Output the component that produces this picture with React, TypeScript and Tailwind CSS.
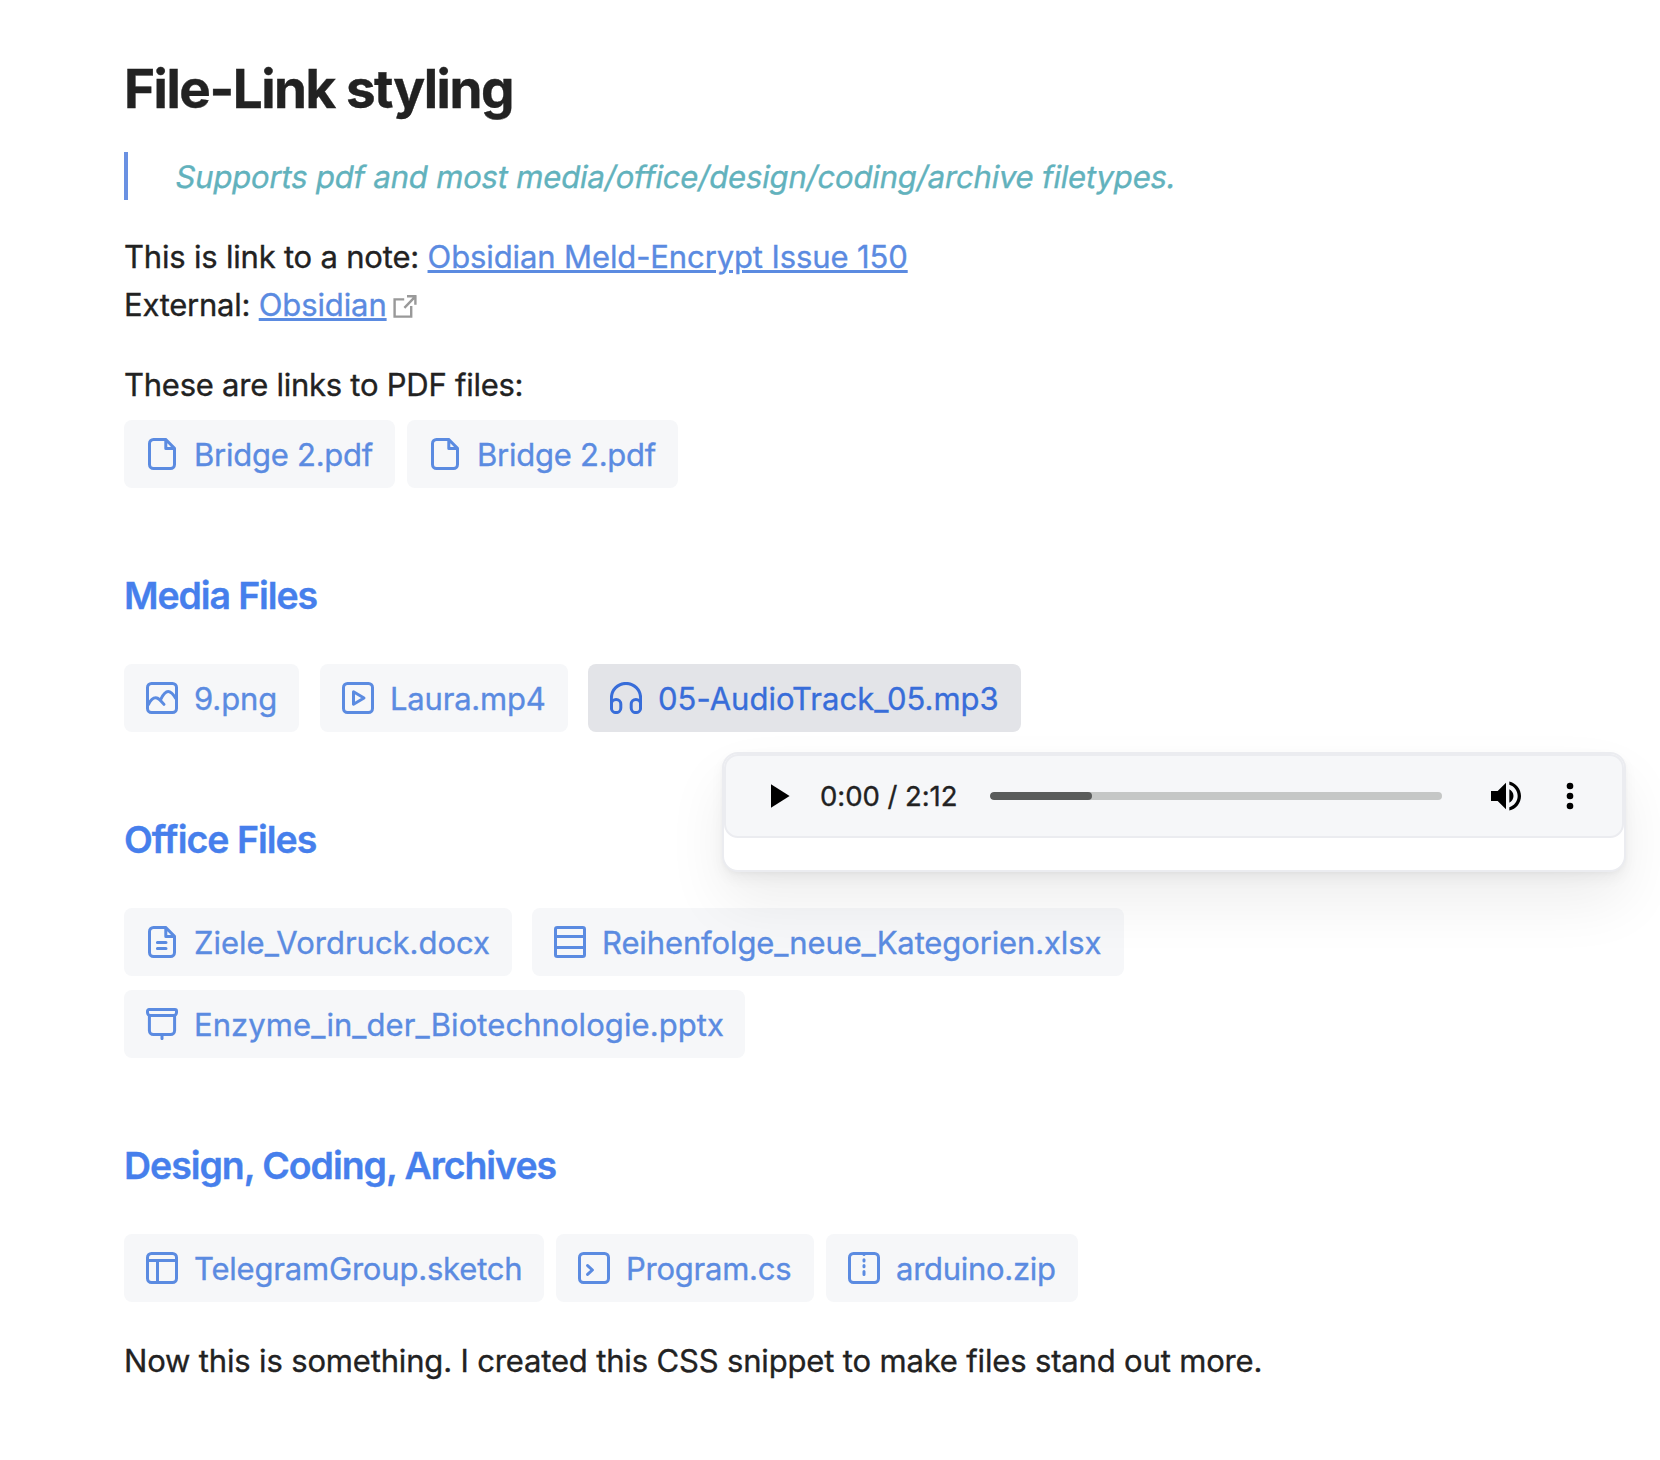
import React from "react";

type IconName = "pdf" | "image" | "video" | "audio" | "doc" | "sheet" | "slides" | "design" | "code" | "zip";

const FILE_OUTLINE =
  "M19.8 1.5H7.5a4 4 0 0 0-4 4v21a4 4 0 0 0 4 4h17a4 4 0 0 0 4-4V10.4L19.8 1.5V10.6H28.3";

const shapes: Record<IconName, React.ReactNode> = {
  pdf: <path d={FILE_OUTLINE} />,
  image: (
    <>
      <rect x="1.5" y="1.5" width="29" height="29" rx="4" />
      <path d="M2.5 22.5C4.5 18 7 15.8 9.8 15.8c2.6 0 4.2 1.8 8.2 6.6" />
      <path d="M14.6 17.6C17.2 12.4 19.3 9.6 22.2 9.6c2.8 0 5 2.6 7.6 7" />
    </>
  ),
  video: (
    <>
      <rect x="1.5" y="1.5" width="29" height="29" rx="4" />
      <path d="M11.5 9.8 22 16 11.5 22.2Z" />
    </>
  ),
  audio: (
    <>
      <path d="M1.4 26V16a14.6 14.6 0 0 1 29.2 0v10" />
      <rect x="1.4" y="17.4" width="9.4" height="13.2" rx="4.7" />
      <rect x="21.2" y="17.4" width="9.4" height="13.2" rx="4.7" />
    </>
  ),
  doc: (
    <>
      <path d={FILE_OUTLINE} />
      <path d="M11.4 16.5h8.6M11.4 22.6h8.6" />
    </>
  ),
  sheet: (
    <>
      <rect x="1.5" y="1.5" width="29" height="29" rx="1.8" />
      <path d="M1.5 10.6h29M1.5 21.5h29" />
    </>
  ),
  slides: (
    <>
      <path d="M3 1.5h26a1.5 1.5 0 0 1 1.5 1.5v1.5a3 3 0 0 1-3 3h-23a3 3 0 0 1-3-3V3A1.5 1.5 0 0 1 3 1.5Z" />
      <path d="M3.4 7.5v15a4 4 0 0 0 4 4h17.2a4 4 0 0 0 4-4v-15" />
      <path d="M16 27v3.6" />
    </>
  ),
  design: (
    <>
      <rect x="1.5" y="1.5" width="29" height="29" rx="4" />
      <path d="M1.5 8.5h29M11.5 8.5v22" />
    </>
  ),
  code: (
    <>
      <rect x="1.5" y="1.5" width="29" height="29" rx="4" />
      <path d="m9.6 13.6 4.8 4.4-4.8 4.4" />
    </>
  ),
  zip: (
    <>
      <rect x="1.5" y="1.5" width="29" height="29" rx="4" />
      <path d="M16 1.8v.6M16 7.7v1.2M16 13.5v1.2M16 19.6v2.9" />
    </>
  ),
};

function FileIcon({ name }: { name: IconName }) {
  return (
    <svg
      className="size-8 shrink-0"
      viewBox="0 0 32 32"
      fill="none"
      stroke="currentColor"
      strokeWidth="3"
      strokeLinecap="round"
      strokeLinejoin="round"
    >
      {shapes[name]}
    </svg>
  );
}

interface FileLinkProps {
  icon: IconName;
  label: string;
  size: string;
  active?: boolean;
  children?: React.ReactNode;
}

function FileLink({ icon, label, size, active, children }: FileLinkProps) {
  const tone = active ? "bg-[#e3e4e8] text-[#386dd9]" : "bg-[#f6f7f9] text-[#5b8be1]";
  return (
    <a className={`relative flex h-[68px] shrink-0 items-center gap-4 rounded-lg pl-[22px] ${tone} ${size}`}>
      <FileIcon name={icon} />
      <span className="pt-[2px] whitespace-nowrap">{label}</span>
      {children}
    </a>
  );
}

function AudioPopover() {
  return (
    <div className="absolute top-[88px] left-[134px] z-10 h-[120px] w-[904px] rounded-2xl border-2 border-[#ebecf0] bg-white shadow-[0_2px_4px_rgba(0,0,0,0.028),0_6.8px_13.4px_rgba(0,0,0,0.042),0_30px_60px_rgba(0,0,0,0.07)]">
      <div className="flex h-[84px] items-center rounded-[14px] border-2 border-[#ebecf0] bg-[#f6f7f9] pl-[45px] text-[27.5px] leading-none tracking-[-0.05px] text-[#222]">
        <svg className="h-6 w-[19px] shrink-0" viewBox="0 0 19 24" fill="#000">
          <path d="M0 .2 18.6 12 0 23.8Z" />
        </svg>
        <span className="w-[200px] shrink-0 pt-[2px] pl-[30px] whitespace-nowrap">0:00 / 2:12</span>
        <div className="h-2 w-[452px] shrink-0 overflow-hidden rounded bg-[#c5c7c6]">
          <div className="h-full w-[102px] rounded bg-[#5a5c5b]" />
        </div>
        <svg className="ml-11 size-10 shrink-0" viewBox="0 0 24 24" fill="#000">
          <path d="M3 9v6h4l5 5V4L7 9H3zm13.5 3c0-1.77-1.02-3.29-2.5-4.03v8.05c1.48-.73 2.5-2.25 2.5-4.02zM14 3.23v2.06c2.89.86 5 3.54 5 6.71s-2.11 5.85-5 6.71v2.06c4.01-.91 7-4.49 7-8.77s-2.99-7.86-7-8.77z" />
        </svg>
        <svg className="ml-6 size-10 shrink-0" viewBox="0 0 24 24" fill="#000">
          <circle cx="12" cy="6" r="2" />
          <circle cx="12" cy="12" r="2" />
          <circle cx="12" cy="18" r="2" />
        </svg>
      </div>
    </div>
  );
}

function SectionTitle({ children, tracking }: { children: React.ReactNode; tracking: string }) {
  return (
    <h2 className={`mt-[84px] mb-[44px] text-[37.5px] leading-[48px] font-semibold text-[#467fec] ${tracking}`}>
      {children}
    </h2>
  );
}

const linkClass = "text-[#5b8be1] underline decoration-[3px] underline-offset-[2px]";

export default function App() {
  return (
    <main className="h-[1460px] w-[1660px] overflow-hidden bg-white pt-[57px] pl-[124px] font-['Inter','Liberation_Sans',sans-serif] text-[31px] leading-[48px] text-[#222] [-webkit-text-stroke:0.35px_currentColor]">
      <h1 className="text-[53px] leading-[64px] font-bold tracking-[-1.49px]">File-Link styling</h1>

      <blockquote className="mt-[31px] h-12 border-l-4 border-[#6a91e2] pl-[46px] leading-[50px] tracking-[-0.165px] text-[#62b2bd]">
        <span className="inline-block origin-[0_73%] -skew-x-[10deg] whitespace-nowrap">
          Supports pdf and most media/office/design/coding/archive filetypes.
        </span>
      </blockquote>

      <p className="mt-8 h-12 leading-[50px] tracking-[-0.2px]">
        This is link to a note: <a className={`tracking-[-0.11px] ${linkClass}`}>Obsidian Meld-Encrypt Issue 150</a>
      </p>
      <p className="flex h-12 items-start leading-[50px] tracking-[-0.24px]">
        <span className="whitespace-pre">External: </span>
        <a className={`tracking-[-0.11px] ${linkClass}`}>Obsidian</a>
        <svg
          className="mt-[14px] ml-[6px] size-6"
          viewBox="0 0 24 24"
          fill="none"
          stroke="#999"
          strokeWidth="2.4"
        >
          <path d="M11.2 5.4H1.6V22.6H18.2V12M11.4 13.8 22.2 2.6M14 2.2h9.3M22.4 1.2v9.6" />
        </svg>
      </p>

      <p className="mt-8 h-12 leading-[50px] tracking-[-0.25px]">These are links to PDF files:</p>
      <div className="mt-3 flex gap-3">
        <FileLink icon="pdf" label="Bridge 2.pdf" size="w-[271px] tracking-[-0.25px]" />
        <FileLink icon="pdf" label="Bridge 2.pdf" size="w-[271px] tracking-[-0.25px]" />
      </div>

      <SectionTitle tracking="tracking-[-1.13px]">Media Files</SectionTitle>
      <div className="flex gap-5">
        <FileLink icon="image" label="9.png" size="w-[175px] mr-px tracking-[-0.1px]" />
        <FileLink icon="video" label="Laura.mp4" size="w-[248px] tracking-[-0.2px]" />
        <FileLink icon="audio" label="05-AudioTrack_05.mp3" size="w-[433px] tracking-[0.01px]" active>
          <AudioPopover />
        </FileLink>
      </div>

      <SectionTitle tracking="tracking-[-1px]">Office Files</SectionTitle>
      <div className="flex gap-5">
        <FileLink icon="doc" label="Ziele_Vordruck.docx" size="w-[388px] tracking-[0px]" />
        <FileLink icon="sheet" label="Reihenfolge_neue_Kategorien.xlsx" size="w-[592px] tracking-[-0.12px]" />
      </div>
      <div className="mt-[14px] flex">
        <FileLink icon="slides" label="Enzyme_in_der_Biotechnologie.pptx" size="w-[621px] tracking-[0.07px]" />
      </div>

      <SectionTitle tracking="tracking-[-1.06px]">Design, Coding, Archives</SectionTitle>
      <div className="flex gap-3">
        <FileLink icon="design" label="TelegramGroup.sketch" size="w-[420px] tracking-[-0.19px]" />
        <FileLink icon="code" label="Program.cs" size="w-[258px] tracking-[-0.24px]" />
        <FileLink icon="zip" label="arduino.zip" size="w-[252px] tracking-[-0.28px]" />
      </div>

      <p className="mt-[35px] tracking-[-0.162px]">
        Now this is something. I created this CSS snippet to make files stand out more.
      </p>
    </main>
  );
}
